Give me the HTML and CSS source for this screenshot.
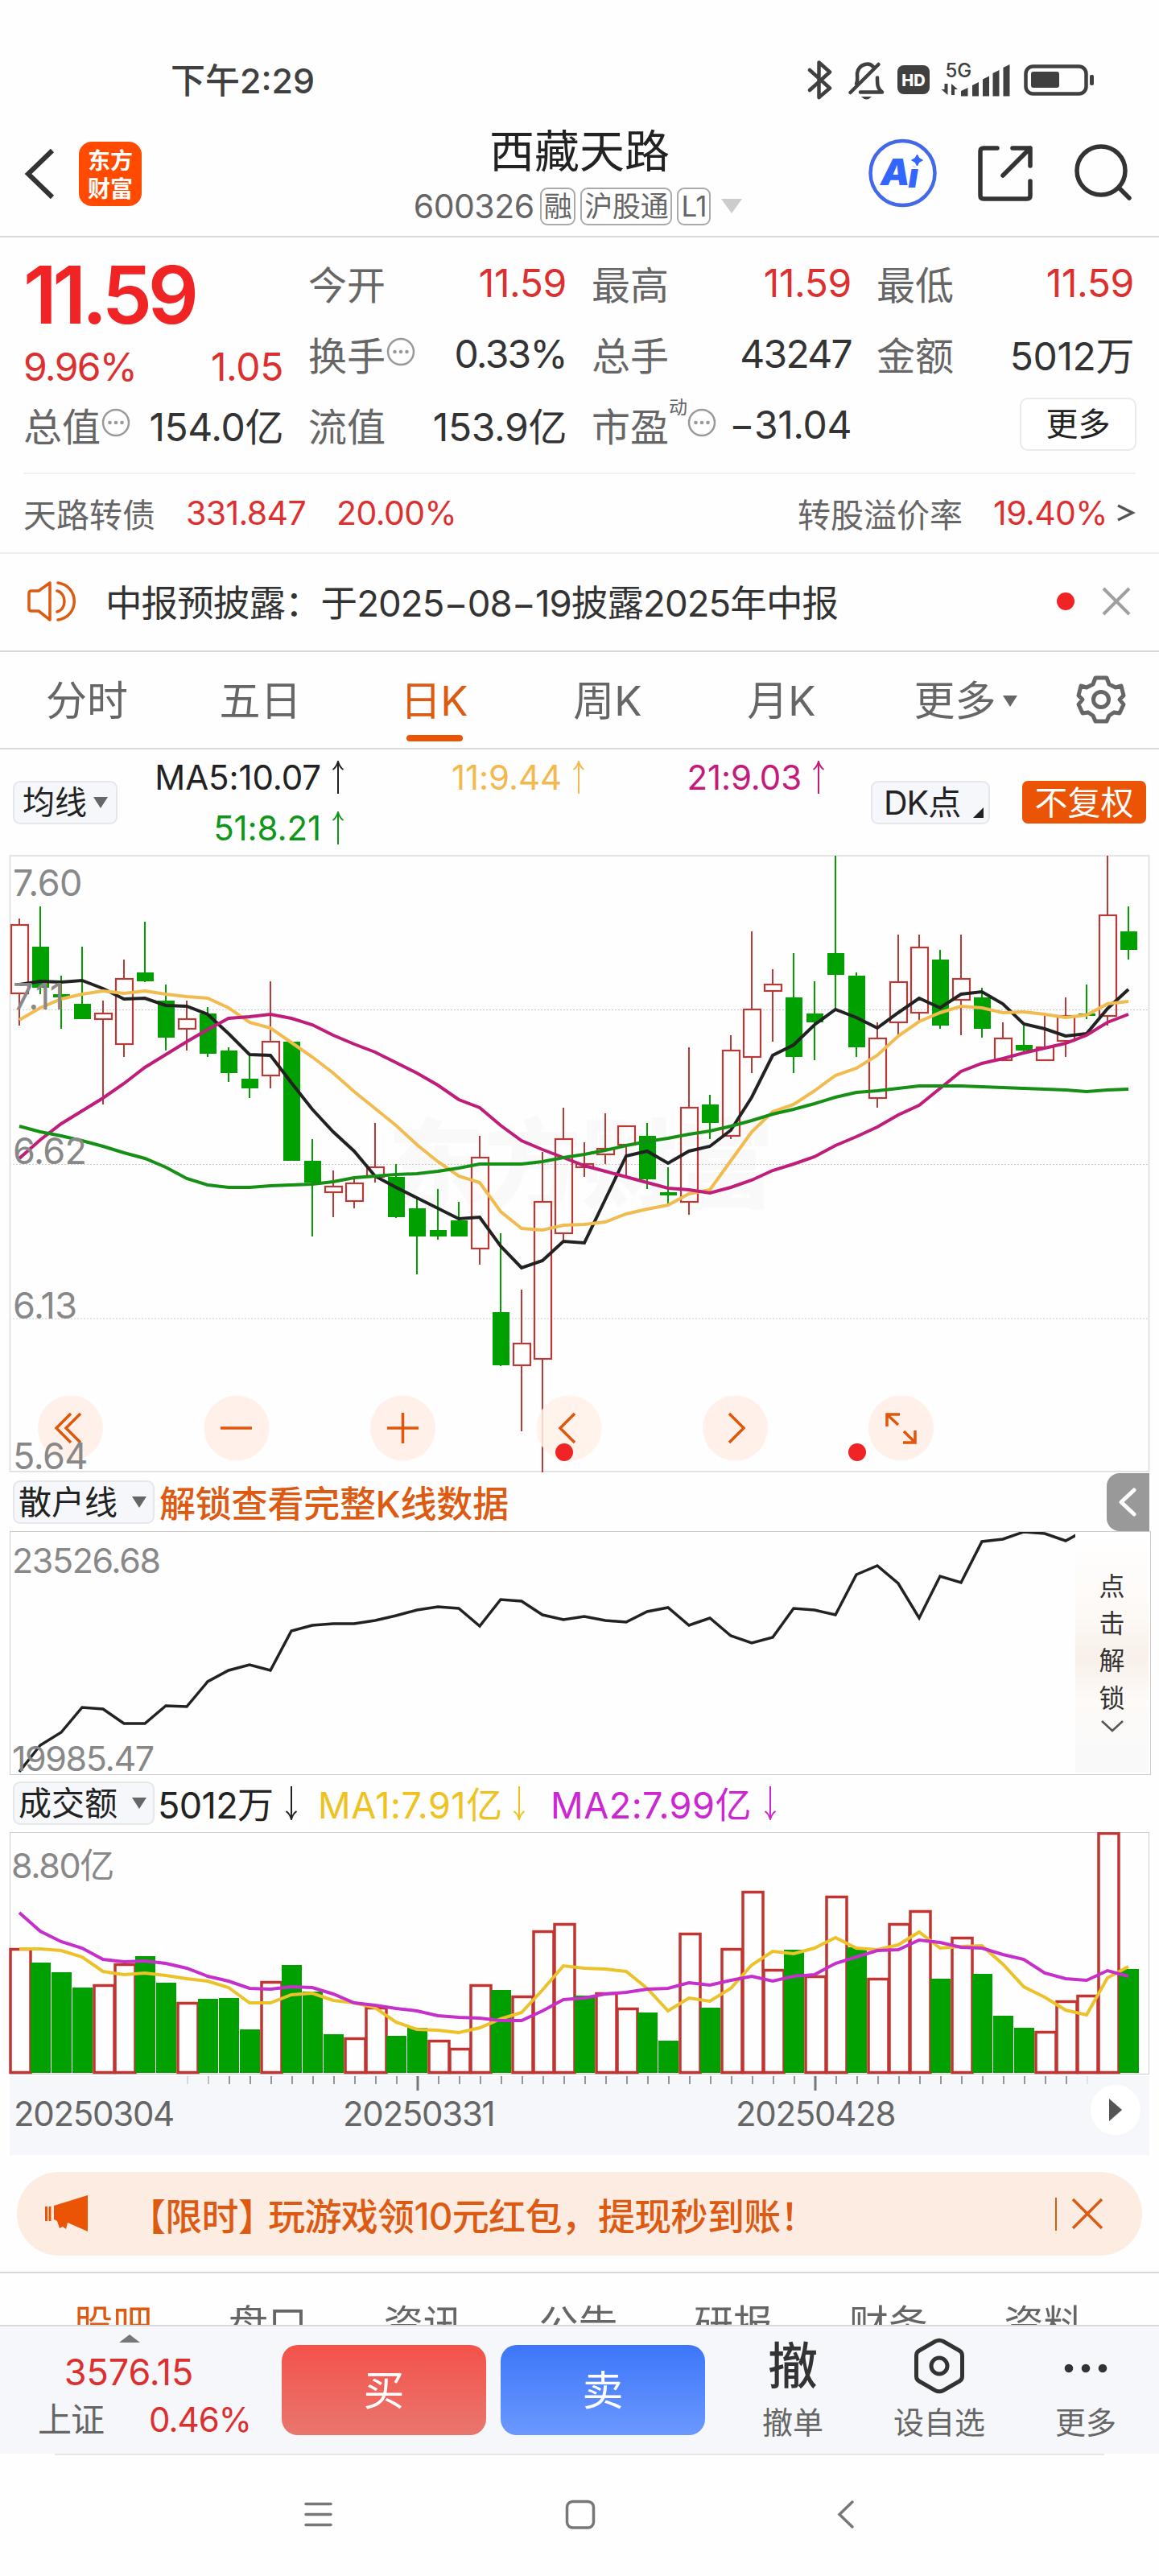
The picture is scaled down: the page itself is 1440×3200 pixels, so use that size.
FILE: index.html
```html
<!DOCTYPE html>
<html lang="zh-CN">
<head>
<meta charset="utf-8">
<title>西藏天路 600326</title>
<link rel="stylesheet" href="styles.css">
</head>
<body>
<div class="status">
  <span class="time">下午2:29</span>
  <svg class="status-icons" width="370" height="60" viewBox="1000 70 370 60">
    <g fill="none" stroke="#404040" stroke-width="4.5" stroke-linejoin="round" stroke-linecap="round">
      <path d="M1006 87l25 22.500-13.500 11.500V77.500l13.500 12L1006 112"/>
      <path d="M1064 104c2-4 1-9 1-13 2-12 15-14 20-8M1056.500 115l35-35M1069 114.500h27c-6-5-6-9-6-18"/>
      <rect x="1274.500" y="82.500" width="75" height="34" rx="9"/>
    </g>
    <path d="M1070 120h13q-6.500 7-13 0z" fill="#404040"/>
    <rect x="1115" y="81" width="40" height="36" rx="8" fill="#404040"/>
    <text class="hd" x="1135" y="107">HD</text>
    <text class="fiveg" x="1174.500" y="96">5G</text>
    <g fill="#404040">
      <rect x="1281" y="89" width="35" height="20" rx="3"/>
      <rect x="1354" y="93" width="5" height="13" rx="2"/>
      <path d="M1194 113l8.500-4v10.500h-8.500zM1208 106l8-4v17.500h-8zM1221 98.500l8-4v25h-8zM1233.500 91l8-4v32.500h-8zM1246.500 84l8-4v39.500h-8z"/>
      <path d="M1177.500 104v14l-8-7h4v-7zM1182 118v-14l8 7h-4v7z"/>
    </g>
  </svg>
</div>

<header class="header">
  <svg class="back" width="40" height="70" viewBox="0 0 40 70"><path d="M36 6L6 35l30 29" fill="none" stroke="#333" stroke-width="6"/></svg>
  <div class="logo"><span>东方</span><span>财富</span></div>
  <div class="title">
    <h1>西藏天路</h1>
    <div class="code"><span class="num">600326</span><i>融</i><i>沪股通</i><i>L1</i><svg width="26" height="18" viewBox="0 0 26 18"><path d="M0 0h26L13 18z" fill="#ccc"/></svg></div>
  </div>
  <svg class="actions" width="340" height="90" viewBox="1076 170 340 90">
    <circle cx="1121.500" cy="215" r="40" fill="#fff" stroke="#4169e8" stroke-width="4.500"/>
    <text class="ai" x="1094" y="230">A<tspan class="ai-i" y="233">i</tspan></text>
    <circle cx="1139.500" cy="199" r="9" fill="#fff"/>
    <path d="M1139.500 192l2.500 4.500 4.500 2.500-4.500 2.500-2.500 4.500-2.500-4.500-4.500-2.500 4.500-2.500z" fill="#3366ff" stroke="#3366ff" stroke-width="1"/>
    <g fill="none" stroke="#333" stroke-width="5.500" stroke-linecap="round" stroke-linejoin="round">
      <path d="M1239 184h-17q-4 0-4 4v55q0 4 4 4h54q4 0 4-4v-18M1258 184h22v22M1280 184l-34 34"/>
      <circle cx="1368" cy="212" r="30"/><path d="M1390 233l13 13"/>
    </g>
  </svg>
</header>

<section class="quote">
  <div class="last">
    <div class="price">11.59</div>
    <div class="cell red"><b>9.96%</b><b class="one">1.05</b></div>
  </div>
  <div class="cell red"><span>今开</span><b class="one">11.59</b></div>
  <div class="cell red"><span>最高</span><b class="one">11.59</b></div>
  <div class="cell red"><span>最低</span><b class="one">11.59</b></div>
  <div class="cell"><span>换手<svg class="tip" viewBox="0 0 36 36"><use href="#tip"/></svg></span><b>0.33%</b></div>
  <div class="cell"><span>总手</span><b>43247</b></div>
  <div class="cell"><span>金额</span><b class="one">5012万</b></div>
  <div class="cell"><span>总值<svg class="tip" viewBox="0 0 36 36"><use href="#tip"/></svg></span><b class="one">154.0亿</b></div>
  <div class="cell"><span>流值</span><b class="one">153.9亿</b></div>
  <div class="cell"><span>市盈<sup>动</sup><svg class="tip" viewBox="0 0 36 36"><use href="#tip"/></svg></span><b class="one">−31.04</b></div>
  <div class="cell end"><button class="more">更多</button></div>
</section>
<svg class="defs"><symbol id="tip" viewBox="0 0 36 36"><circle cx="18" cy="18" r="16" fill="none" stroke="#999" stroke-width="2.500"/><circle cx="10.500" cy="18" r="2.300" fill="#999"/><circle cx="18" cy="18" r="2.300" fill="#999"/><circle cx="25.500" cy="18" r="2.300" fill="#999"/></symbol></svg>

<div class="bond">
  <span>天路转债</span><b class="b1">331.847</b><b class="b2">20.00%</b>
  <span class="push">转股溢价率</span><b class="b3">19.40%</b>
  <svg width="24" height="28" viewBox="0 0 24 28"><path d="M2 5l18 9L2 23" fill="none" stroke="#555" stroke-width="3.500"/></svg>
</div>

<div class="notice">
  <svg class="horn" width="64" height="54" viewBox="32 719 64 54"><g fill="none" stroke="#dd5a12" stroke-width="3.500" stroke-linejoin="round" stroke-linecap="round"><path d="M62 723L48 733H39q-3 0-3 3v19q0 3 3 3h9l14 11zM71 733c12 3 12 23 0 26M72 723c27 4 27 42 0 46"/></g></svg>
  <p>中报预披露：于2025−08−19披露2025年中报</p>
  <i class="dot"></i>
  <svg width="36" height="36" viewBox="0 0 36 36"><path d="M2 2l32 32M34 2L2 34" stroke="#a0a0a0" stroke-width="4" fill="none"/></svg>
</div>

<nav class="tabs">
  <a>分时</a><a>五日</a><a class="on">日K</a><a>周K</a><a>月K</a><a class="menu">更多<svg width="18" height="14" viewBox="0 0 18 14"><path d="M0 0h18L9 14z" fill="#666"/></svg></a>
  <svg class="gear" width="64" height="64" viewBox="-32 -32 64 64"><g fill="none" stroke="#666" stroke-width="5" stroke-linejoin="round"><path d="M-7-27H7L10-19 18-15 25-17 28-5 23 0 28 6 23 17 16 16 10 20 7 27H-7L-10 20-16 16-23 17-28 6-23 0-28-5-25-17-18-15-10-19z"/><circle r="9.500"/></g></svg>
</nav>

<div class="legend">
  <button class="pick short">均线<svg width="18" height="14" viewBox="0 0 18 14"><path d="M0 0h18L9 14z" fill="#666"/></svg></button>
  <div class="mas">
    <span class="k">MA5:10.07<svg class="arr"><use href="#up"/></svg></span>
    <span class="y">11:9.44<svg class="arr"><use href="#up"/></svg></span>
    <span class="m">21:9.03<svg class="arr"><use href="#up"/></svg></span>
    <span class="g">51:8.21<svg class="arr"><use href="#up"/></svg></span>
  </div>
  <button class="pick dk">DK点<svg width="13" height="13" viewBox="0 0 13 13"><path d="M13 0v13H0z" fill="#222"/></svg></button>
  <button class="adj">不复权</button>
</div>
<svg class="defs"><symbol id="up" viewBox="0 0 18 42"><path d="M9 3v38M2.500 11Q7 8 9 1q2 7 6.500 10" fill="none" stroke="currentColor" stroke-width="2"/></symbol><symbol id="down" viewBox="0 0 18 42"><path d="M9 0v38M2.500 31Q7 34 9 41q2-7 6.500-10" fill="none" stroke="currentColor" stroke-width="2"/></symbol></svg>

<svg id="kline" class="chart" width="1440" height="767" viewBox="0 1062 1440 767">
  <text class="mark" x="482" y="1491">东方财富</text>
  <path d="M12 1254.500H1427M12 1446.500H1427M12 1638H1427" stroke="#ccc" stroke-width="1" stroke-dasharray="2 2" fill="none"/>
  <rect x="12.500" y="1063" width="1415" height="765" fill="none" stroke="#e3e3e3" stroke-width="2"/>
  <g class="plot"></g>
  <g fill="#fff1e9"><circle cx="87.500" cy="1774" r="40.500"/><circle cx="294" cy="1774" r="40.500"/><circle cx="500.500" cy="1774" r="40.500"/><circle cx="707" cy="1774" r="40.500" opacity=".85"/><circle cx="913.500" cy="1774" r="40.500"/><circle cx="1119.500" cy="1774" r="40.500"/></g>
  <g fill="none" stroke="#e0560b" stroke-width="3.500">
    <path d="M88 1756l-18 18 18 18M100 1756l-18 18 18 18M274 1774h39M481 1774h39M500.500 1755v38M714 1756l-18 18 18 18M906 1756l18 18-18 18"/>
    <path d="M1102 1772v-15h16M1102 1757l14 13M1122 1792h15v-15M1137 1792l-14-14"/>
  </g>
  <circle cx="701" cy="1804" r="11" fill="#f02424"/><circle cx="1065" cy="1804" r="11" fill="#f02424"/>
  <g class="ylab"><text x="16" y="1113">7.60</text><text x="16" y="1254">7.11</text><text x="16" y="1446">6.62</text><text x="16" y="1638">6.13</text><text x="16" y="1825">5.64</text></g>
</svg>

<div class="sub">
  <button class="pick">散户线<svg width="18" height="14" viewBox="0 0 18 14"><path d="M0 0h18L9 14z" fill="#666"/></svg></button>
  <span class="unlock">解锁查看完整K线数据</span>
  <span class="drawer"><svg width="24" height="36" viewBox="0 0 24 36"><path d="M20 3L4 18l16 15" fill="none" stroke="#fff" stroke-width="5" stroke-linecap="round" stroke-linejoin="round"/></svg></span>
</div>

<div class="retail">
  <svg id="retail" width="1336" height="301" viewBox="0 1902 1336 301"><g class="plot"></g><g class="ylab sm"><text x="15" y="1954">23526.68</text><text x="15" y="2200">19985.47</text></g></svg>
  <div class="lock"><span>点</span><span>击</span><span>解</span><span>锁</span><svg width="28" height="16" viewBox="0 0 28 16"><path d="M1 2l13 12L27 2" fill="none" stroke="#555" stroke-width="2.500"/></svg></div>
</div>

<div class="sub amount">
  <button class="pick">成交额<svg width="18" height="14" viewBox="0 0 18 14"><path d="M0 0h18L9 14z" fill="#666"/></svg></button>
  <span class="v0">5012万<svg class="arr"><use href="#down"/></svg></span>
  <span class="v1">MA1:7.91亿<svg class="arr"><use href="#down"/></svg></span>
  <span class="v2">MA2:7.99亿<svg class="arr"><use href="#down"/></svg></span>
</div>

<svg id="volume" class="chart" width="1440" height="303" viewBox="0 2276 1440 303">
  <rect x="12.500" y="2276.500" width="1415" height="300" fill="none" stroke="#ccc"/>
  <g class="plot"></g>
  <g class="ylab sm"><text x="14" y="2333">8.80亿</text></g>
</svg>
<div class="axis">
  <svg id="ticks" width="1416" height="20" viewBox="12 2579 1416 20"></svg>
  <span class="d1">20250304</span><span class="d2">20250331</span><span class="d3">20250428</span>
  <i class="play"><svg width="16" height="28" viewBox="0 0 16 28"><path d="M0 0l16 14L0 28z" fill="#555"/></svg></i>
</div>

<div class="promo">
  <svg width="54" height="46" viewBox="56 2726 54 46"><path d="M109 2726v45l-25-11-2 8-4-3-4 2-3-9-4-2v-17zM56 2740h3v18h-3zM60.500 2740h3v18h-3z" fill="#ea5404"/></svg>
  <p>【限时<span class="rb">】</span>玩游戏领10元红包，提现秒到账！</p>
  <i class="bar"></i>
  <svg width="40" height="40" viewBox="0 0 40 40"><path d="M2 2l36 36M38 2L2 38" stroke="#dd5a12" stroke-width="3.500"/></svg>
</div>

<nav class="feed"><a class="on">股吧</a><a>盘口</a><a>资讯</a><a>公告</a><a>研报</a><a>财务</a><a>资料</a></nav>

<footer class="trade">
  <div class="index"><svg width="26" height="10" viewBox="0 0 26 10"><path d="M0 10L13 0l13 10z" fill="#777"/></svg><b class="pt">3576.15</b><div><span>上证</span><b>0.46%</b></div></div>
  <button class="buy">买</button>
  <button class="sell">卖</button>
  <div class="act a1"><strong>撤</strong><span>撤单</span></div>
  <div class="act a2"><svg width="66" height="70" viewBox="-33 -35 66 70"><path d="M-5-30.500Q0-33 5-30.500L25-19Q28.500-17 28.500-13V13Q28.500 17 25 19L5 30.500Q0 33-5 30.500L-25 19Q-28.500 17-28.500 13V-13Q-28.500-17-25-19z" fill="none" stroke="#333" stroke-width="5"/><circle r="10" fill="none" stroke="#333" stroke-width="5"/></svg><span>设自选</span></div>
  <div class="act a3"><svg width="60" height="70" viewBox="-30 -35 60 70"><g fill="#333"><circle cx="-21" cy="3" r="5.300"/><circle cy="3" r="5.300"/><circle cx="21" cy="3" r="5.300"/></g></svg><span>更多</span></div>
</footer>

<div class="sysnav">
  <svg width="1440" height="60" viewBox="0 3094 1440 60"><g fill="none" stroke="#777" stroke-width="3.500" stroke-linecap="round"><path d="M380 3110.500h31M380 3123.500h31M380 3136.500h31"/><rect x="704.500" y="3107.500" width="33" height="32.500" rx="7"/><path d="M1059 3108l-16 15.500 16 15.500"/></g></svg>
</div>
<script src="charts.js"></script>
</body>
</html>
```
FILE: styles.css
```css
* { box-sizing: border-box; margin: 0; padding: 0; }
body { width: 1440px; height: 3200px; background: #fefefe; overflow: hidden; font-family: Inter, "Noto Sans CJK SC", sans-serif; color: #333; }
button { font: inherit; border: 0; }
b, i { font-weight: 400; font-style: normal; }
a { color: inherit; }
svg { display: block; flex: none; }
.defs { width: 0; height: 0; position: absolute; }

.status { height: 150px; padding: 70px 70px 0 212px; display: flex; justify-content: space-between; align-items: flex-start; }
.time { font-size: 43px; line-height: 60px; font-weight: 500; color: #404040; letter-spacing: 0; }
.hd { font: 800 20px Inter; fill: #fff; text-anchor: middle; }
.fiveg { font: 500 24px Inter; fill: #404040; }

.header { height: 145px; border-bottom: 2px solid #d9d9d9; display: flex; align-items: flex-start; }
.back { margin: 31px 0 0 29px; }
.logo { width: 78px; height: 80px; margin: 26px 0 0 29px; border-radius: 16px; background: #ff4a00; color: #fff; display: flex; flex-direction: column; justify-content: center; align-items: center; font: 700 28px/35px "Noto Sans CJK SC", sans-serif; }
.title { width: 480px; margin-left: 304px; display: flex; flex-direction: column; align-items: center; }
.title h1 { font-size: 56px; line-height: 76px; font-weight: 400; color: #222; }
.code { display: flex; align-items: center; height: 60px; font-size: 41px; color: #666; gap: 6px; margin-left: -4px; }
.code .num { letter-spacing: -.5px; margin-right: 1px; }
.code i { height: 47px; border: 2px solid #aaa; border-radius: 9px; padding: 0 3px; font-size: 35px; line-height: 42px; letter-spacing: -.3px; }
.code svg { margin-left: 7px; }
.actions { margin: 20px 0 0 116px; }
.ai { font: italic 900 46px Inter; fill: #3366ff; letter-spacing: -2px; }
.ai-i { font-size: 42px; }

.quote { height: 292px; padding: 12px 29px 0 29px; display: grid; grid-template-columns: 323px 321px 323px 320px; grid-template-rows: 88px 88px 88px; column-gap: 31px; }
.last { grid-row: 1 / 3; }
.price { height: 118px; line-height: 118px; font-size: 99px; font-weight: 600; color: #f02424; letter-spacing: -5.500px; }
.last .cell { height: 60px; }
.cell { display: flex; justify-content: space-between; align-items: center; font-size: 48px; white-space: nowrap; }
.cell b { letter-spacing: -1.700px; }
.cell b.one { letter-spacing: -.4px; }
.cell span { color: #666; display: flex; align-items: center; }
.cell.end { justify-content: flex-end; }
.cell.red b { color: #dc3030; }
.tip { width: 36px; height: 36px; margin: -4px 0 0 1px; }
sup { font-size: 23px; line-height: 24px; margin-top: -42px; }
sup + .tip { margin-left: 0; }
.more { width: 145px; height: 66px; border: 2px solid #eaeaea; border-radius: 10px; background: #fff; font-size: 40px; line-height: 60px; color: #222; margin: 0 -3px 0 0; }

.bond { height: 99px; margin: 0 29px 0 29px; border-top: 2px solid #f2f2f2; display: flex; align-items: center; font-size: 41px; color: #666; padding-bottom: 2px; }
.bond b { color: #dc3030; letter-spacing: -.6px; }
.b1 { margin-left: 38px; } .b2 { margin-left: 38px; } .bond .b3 { margin: 0 11px 0 38px; }
.push { margin-left: auto; }

.notice { height: 122px; border-top: 2px solid #eee; display: flex; align-items: center; padding: 0 35px 2px 32px; }
.notice p { margin: -3px 0 0 35px; font-size: 45.500px; white-space: nowrap; letter-spacing: -.9px; }
.dot { width: 22px; height: 22px; border-radius: 50%; background: #f02424; margin: 0 34px 0 auto; }

.tabs { height: 123px; border-top: 2px solid #d9d9d9; border-bottom: 2px solid #d9d9d9; display: grid; grid-template-columns: 216px 215px 216px 216px 216px 236px 61px; font-size: 51px; line-height: 124px; color: #666; }
.tabs a { display: flex; justify-content: center; align-items: center; height: 121px; }
.tabs a svg { margin-left: 8px; }
.tabs .menu { padding-left: 5px; }
.tabs .on { color: #dd5a12; position: relative; letter-spacing: -1px; }
.tabs .on::after { content: ""; position: absolute; left: 74px; bottom: 10px; width: 70px; height: 8px; border-radius: 4px; background: #ea5404; }
.gear { margin: 27px 0 0 21px; }

.legend { height: 131px; display: flex; align-items: flex-start; padding: 39px 16px 0; }
.pick { width: 176px; height: 54px; border: 2px solid #e6e7eb; border-radius: 9px; background: #f6f7fa; font-size: 41px; line-height: 50px; color: #222; display: flex; align-items: center; justify-content: space-between; padding: 0 8px 0 5px; white-space: nowrap; flex: none; }
.pick.short { width: 130px; padding: 0 10px 0 10px; font-size: 40px; }
.mas { margin: -36px 0 0 47px; width: 840px; display: grid; grid-template-columns: 236px 299px 298px; font-size: 42px; line-height: 63px; letter-spacing: -.1px; }
.mas span { display: flex; justify-content: flex-end; align-items: center; }
.arr { width: 18px; height: 42px; margin-left: 12px; }
.k { color: #222; } .y { color: #f3b94f; } .m { color: #c31a7c; } .g { color: #109618; }
.dk { width: 148px; margin-left: 49px; padding-left: 14px; align-items: center; padding-right: 6px; letter-spacing: -1px; }
.dk svg { align-self: flex-end; margin-bottom: 6px; }
.adj { width: 154px; height: 53px; margin-left: 40px; border-radius: 7px; background: #ea5404; color: #fff; font-size: 41px; line-height: 50px; flex: none; }

.mark { font: 900 120px "Noto Sans CJK SC", sans-serif; fill: #f9f9f9; }
.ylab { font-size: 45px; fill: #888; letter-spacing: -.5px; }
.ylab.sm { font-size: 43px; letter-spacing: -1.400px; }

.sub { height: 73px; display: flex; align-items: center; padding-left: 16px; }
.unlock { margin-left: 6px; font-size: 45px; color: #dd5a12; font-weight: 500; white-space: nowrap; letter-spacing: -.2px; }
.drawer { width: 53px; height: 72px; margin: 0 12px 0 auto; border-radius: 16px 0 0 16px; background: #999; display: flex; align-items: center; justify-content: center; padding-right: 2px; }
.retail { position: relative; height: 301px; display: flex; }
.retail::before { content: ""; position: absolute; left: 12px; top: 0; width: 1416px; height: 301px; border: 1.500px solid #ccc; }
.lock { width: 91px; height: 298px; margin-top: 1.500px; padding-top: 44px; background: linear-gradient(#fff, #fdf9f5 35%, #f8f0ea 52%, #fdfaf7 70%, #f9f9fb); display: flex; flex-direction: column; align-items: center; font-size: 32px; line-height: 46.400px; }
.lock svg { margin-top: 3px; }
.amount { font-size: 45px; letter-spacing: .5px; }
.amount .pick { letter-spacing: 0; }
.amount > span { display: flex; align-items: center; white-space: nowrap; }
.v0 { color: #222; width: 199px; margin-left: 4px; letter-spacing: -.6px; } .v1 { color: #efc21f; width: 289px; } .v2 { color: #cc26d2; }
.v0 .arr { margin-left: auto; margin-right: 24px; } .v1 .arr { margin-left: auto; margin-right: 30px; } .v2 .arr { margin-left: 14px; }

.axis { position: relative; height: 98px; margin: 0 12px; background: #f6f7fa; font-size: 42px; color: #666; letter-spacing: -1.300px; display: flex; line-height: 93px; }
#ticks { position: absolute; left: 0; top: 0; }
.d1 { margin-left: 5px; width: 409px; } .d2 { width: 488px; } .d3 { width: 436px; }
.play { width: 62px; height: 62px; margin: 11px 0 0 5px; border-radius: 50%; background: #fff; display: flex; align-items: center; justify-content: center; }

.promo { height: 104px; margin: 21px 21px 20px; border-radius: 52px; background: #fcece2; display: flex; align-items: center; padding-left: 35px; color: #dd5a12; }
.promo p { width: 1151px; margin-left: 50px; font-size: 46px; white-space: nowrap; letter-spacing: -.7px; font-weight: 500; }
.rb { margin-right: -8px; }
.bar { width: 2px; height: 41px; margin-right: 18px; background: #dd5a12; }

.feed { height: 68px; border-top: 2px solid #d9d9d9; border-bottom: 2px solid #d9d9d9; overflow: hidden; display: grid; grid-template-columns: repeat(7, 192.700px); padding-left: 44px; font-size: 49px; line-height: 60px; color: #666; text-align: center; }
.feed a { margin-top: 34px; }
.feed .on { color: #dd5a12; }

.trade { height: 158px; background: #f6f7fa; display: flex; }
.index { width: 350px; padding: 10px 28px 0 47px; color: #dc3030; }
.index > svg { margin-left: 101px; }
.pt { display: block; width: 226px; text-align: center; font-size: 45px; line-height: 74px; letter-spacing: -.1px; }
.index div { display: flex; justify-content: space-between; font-size: 42px; line-height: 44px; padding-right: 10px; letter-spacing: -1px; }
.index span { color: #666; }
.buy, .sell { width: 254px; height: 112px; margin-top: 23px; border-radius: 20px; color: #fff; font-size: 51px; line-height: 114px; }
.buy { background: linear-gradient(#f4524a, #e9766e); }
.sell { margin-left: 18px; background: linear-gradient(#3c76f8, #6c98ff); }
.act { display: flex; flex-direction: column; align-items: center; width: 160px; padding-top: 14px; font-size: 38px; line-height: 66px; color: #666; }
.act strong { height: 72px; font-size: 62px; line-height: 72px; font-weight: 500; color: #333; }
.act svg { margin-bottom: 2px; }
.a1 { margin-left: 29px; } .a2 { margin-left: 22px; } .a3 { margin-left: 22px; }
.sysnav::before { content: ""; display: block; width: 1304px; height: 2px; margin: 0 auto 44px; background: #e6e6e8; }
```
FILE: charts.js
```js
// Candles: [rising, high, body top, body bottom, low]; one every STEP px.
const X0 = 24, STEP = 26;
const RED = '#b83a36', GREEN = '#00a000';
const x = i => X0 + STEP * i;

const candles = [
  [1,1141,1148,1235,1274],[0,1126,1176,1227,1235],[0,1212,1235,1239,1278],[0,1176,1247,1266,1266],[1,1243,1258,1267,1372],[1,1192,1215,1298,1313],
  [0,1145,1208,1219,1220],[0,1223,1243,1289,1305],[1,1243,1265,1279,1305],[0,1251,1259,1309,1313],[0,1301,1305,1333,1344],[0,1309,1340,1352,1364],
  [1,1219,1293,1337,1352],[0,1294,1294,1442,1442],[0,1415,1442,1469,1536],[1,1454,1473,1482,1512],[1,1464,1469,1493,1501],[1,1395,1449,1463,1469],
  [0,1446,1462,1512,1513],[0,1488,1501,1536,1583],[0,1477,1528,1536,1540],[0,1493,1516,1536,1536],[1,1411,1437,1552,1571],[0,1532,1630,1696,1697],
  [1,1602,1668,1697,1778],[1,1431,1492,1689,1829],[1,1376,1414,1533,1540],[1,1419,1445,1451,1462],[1,1383,1426,1435,1446],[1,1398,1398,1423,1462],
  [0,1395,1411,1465,1477],[0,1450,1481,1485,1496],[1,1301,1375,1494,1509],[0,1360,1372,1395,1415],[1,1286,1304,1412,1415],[1,1157,1253,1314,1333],
  [1,1204,1222,1232,1294],[0,1184,1239,1313,1333],[0,1219,1259,1270,1317],[0,1063,1184,1211,1254],[0,1208,1212,1301,1313],[1,1270,1289,1365,1376],
  [1,1161,1219,1271,1289],[1,1161,1176,1259,1269],[0,1180,1192,1274,1278],[1,1161,1215,1243,1286],[0,1227,1239,1278,1289],[1,1270,1289,1318,1318],
  [0,1274,1298,1305,1306],[1,1262,1300,1318,1318],[1,1239,1261,1294,1313],[0,1223,1259,1262,1266],[1,1063,1136,1263,1274],[0,1126,1157,1180,1192]
];
const averages = [
  ['#222', [1223,1219,1220,1218,1228,1241,1240,1249,1250,1260,1284,1310,1311,1345,1378,1406,1430,1461,1475,1488,1501,1514,1512,1548,1575,1566,1542,1544,1490,1436,1430,1445,1430,1424,1404,1363,1311,1298,1273,1254,1264,1277,1258,1240,1252,1235,1232,1247,1272,1278,1287,1284,1253,1229]],
  ['#f1bb50', [1267,1252,1241,1235,1231,1234,1231,1235,1238,1240,1252,1270,1277,1295,1313,1333,1356,1377,1398,1422,1443,1461,1469,1505,1526,1528,1522,1521,1518,1508,1502,1497,1483,1478,1442,1406,1381,1372,1355,1336,1327,1311,1287,1269,1258,1250,1252,1258,1257,1260,1264,1261,1247,1244]],
  ['#c01c7a', [1439,1416,1396,1380,1364,1346,1326,1310,1294,1279,1265,1263,1260,1265,1273,1286,1297,1307,1320,1333,1348,1366,1376,1398,1417,1428,1438,1448,1455,1462,1469,1476,1478,1482,1475,1466,1454,1446,1437,1423,1412,1400,1385,1373,1352,1331,1321,1315,1308,1302,1296,1286,1270,1260]],
  ['#159015', [1399,1406,1411,1417,1424,1432,1439,1450,1464,1472,1475,1475,1473,1472,1471,1468,1463,1461,1459,1458,1455,1451,1446,1446,1446,1443,1438,1434,1429,1423,1418,1414,1409,1405,1399,1392,1384,1378,1371,1363,1357,1355,1352,1349,1349,1349,1350,1351,1352,1353,1354,1356,1354,1353]]
];
const retail = [2201,2168,2152,2121,2123,2141,2141,2119,2120,2089,2075,2068,2075,2026,2019,2017,2017,2013,2007,2000,1996,1998,2020,1987,1989,2006,2012,2008,2013,2015,2002,1997,2019,2010,2032,2041,2034,1998,2000,2006,1956,1945,1967,2010,1958,1966,1915,1912,1903,1905,1914,1900];
const volumes = [2420,2438,2450,2469,2465,2439,2430,2463,2487,2483,2482,2521,2461,2441,2474,2527,2531,2493,2529,2519,2534,2544,2465,2472,2479,2398,2389,2479,2475,2494,2500,2535,2401,2494,2420,2349,2446,2422,2454,2355,2419,2457,2389,2373,2458,2406,2452,2504,2519,2523,2485,2478,2276,2446];
const volumeUp = '100011001000100011001110111011001011101101110100011110';
const volumeAverages = [
  ['#ebc22a', [2421,2421,2423,2431,2449,2453,2451,2454,2458,2461,2469,2488,2488,2478,2476,2485,2488,2494,2512,2521,2522,2525,2519,2508,2500,2472,2442,2445,2446,2449,2470,2498,2482,2486,2470,2441,2424,2427,2420,2407,2420,2422,2416,2400,2420,2418,2417,2440,2468,2481,2497,2503,2457,2443]],
  ['#c52fca', [2376,2399,2412,2420,2434,2437,2436,2439,2445,2455,2461,2470,2471,2468,2469,2477,2488,2491,2495,2498,2504,2506,2507,2510,2510,2498,2484,2482,2477,2475,2471,2470,2463,2466,2460,2455,2461,2455,2453,2439,2431,2423,2422,2410,2413,2419,2420,2428,2434,2451,2458,2460,2448,2455]]
];

const line = (ys, color, w) =>
  `<polyline points="${ys.map((y, i) => x(i) + ',' + y).join(' ')}" fill="none" stroke="${color}" stroke-width="${w}"/>`;

document.querySelector('#kline .plot').innerHTML = candles.map(([up, h, t, b, l], i) => {
  const c = up ? RED : GREEN;
  const body = up
    ? `<rect x="${x(i) - 10}" y="${t + 1}" width="21" height="${b - t - 2}" fill="none" stroke="${c}" stroke-width="2.2"/>`
    : `<rect x="${x(i) - 10}" y="${t}" width="21" height="${b - t}" fill="${c}"/>`;
  return `<path d="M${x(i)} ${h}V${t}M${x(i)} ${b}V${l}" stroke="${c}" stroke-width="2"/>` + body;
}).join('') + averages.map(([c, ys]) => line(ys, c, 4)).join('');

document.querySelector('#retail .plot').innerHTML = line(retail, '#222', 3.5);

document.querySelector('#volume .plot').innerHTML = volumes.map((t, i) => volumeUp[i] === '1'
  ? `<rect x="${x(i) - 11}" y="${t + 1.5}" width="25" height="${2576 - t - 3}" fill="none" stroke="#c03432" stroke-width="3.500"/>`
  : `<rect x="${x(i) - 12}" y="${t}" width="25" height="${2575 - t}" fill="${GREEN}"/>`
).join('') + volumeAverages.map(([c, ys]) => line(ys, c, 4)).join('');

let ticks = '';
for (let i = 8; i <= 51; i++) {
  const major = i === 19 || i === 38;
  const fade = i === 8 ? .3 : i === 9 ? .6 : i === 51 ? .2 : 1;
  ticks += `<path d="M${x(i) + 1} 2579v${major ? 18 : 10}" stroke="#777" stroke-width="${major ? 3 : 1.5}" opacity="${fade}"/>`;
}
document.getElementById('ticks').innerHTML = ticks;
```
